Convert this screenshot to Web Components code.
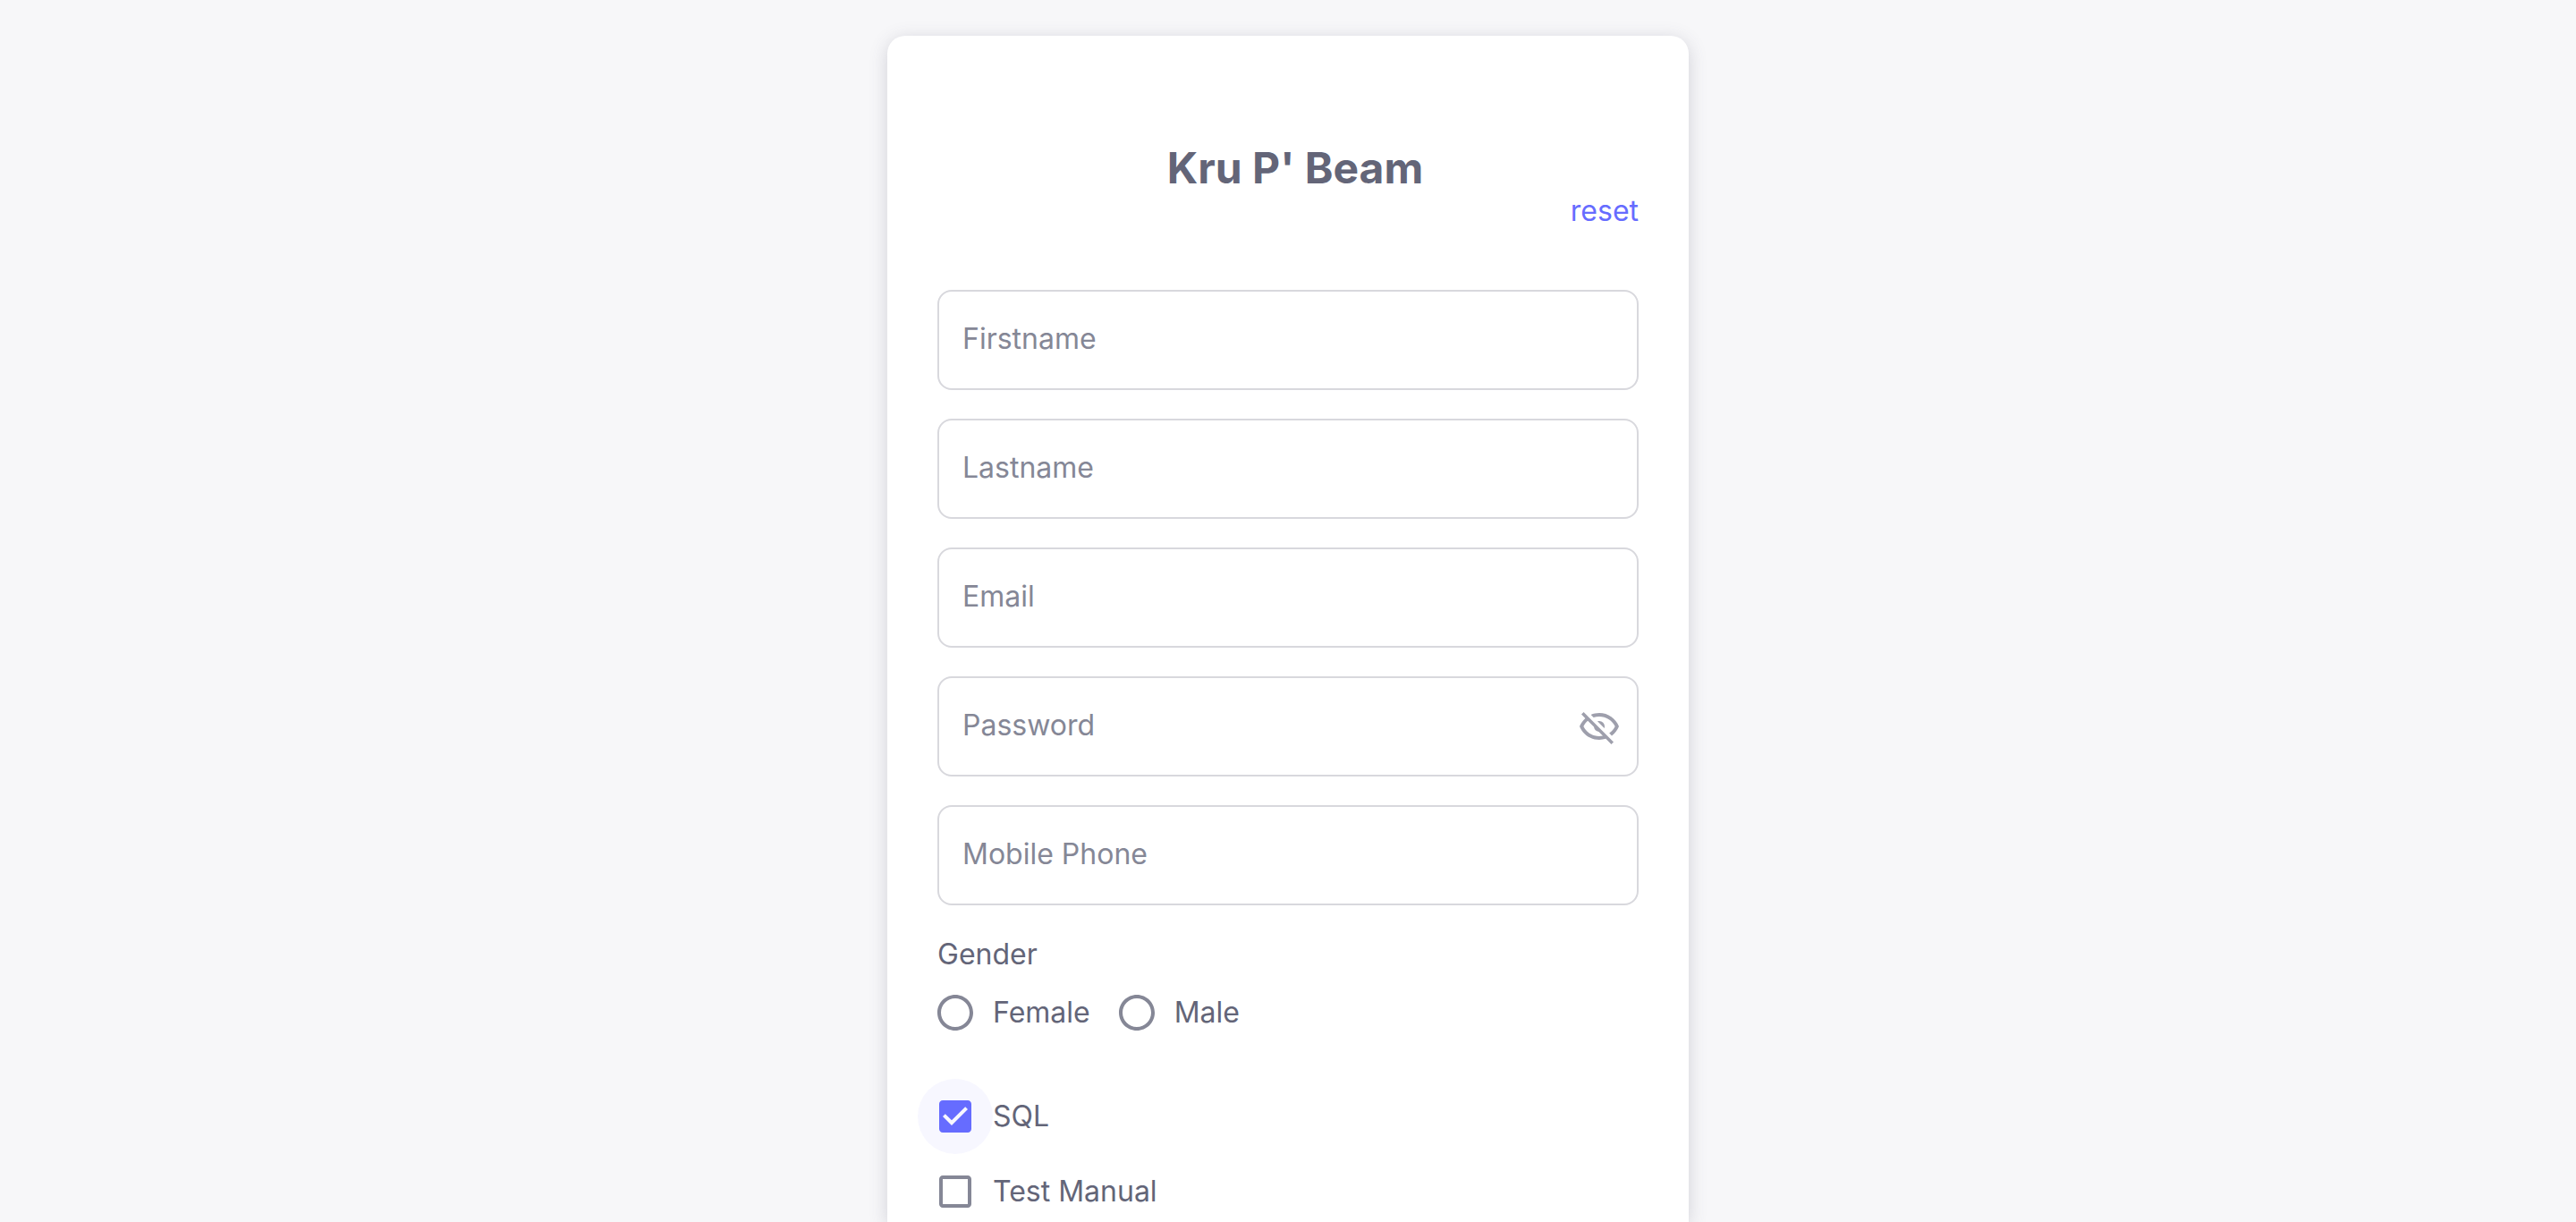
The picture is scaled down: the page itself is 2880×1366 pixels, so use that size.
<!DOCTYPE html>
<html lang="en">
<head>
<meta charset="utf-8">
<title>Kru P' Beam</title>
<style>
  html, body { height: 100%; margin: 0; }
  body {
    --text: #636578;
    --muted: #858796;
    --line: #d8d8dd;
    --icon: #9e9fac;
    --primary: #666cff;
    background: #f7f7f9;
    color: var(--text);
    font: 400 32px/46px Inter, "Liberation Sans", sans-serif;
    overflow: hidden;
  }
</style>
</head>
<body>
<register-page></register-page>

<template id="tpl-page">
  <style>
    :host { display: flex; justify-content: center; height: 100%; box-sizing: border-box; padding: 40px 40px 0; }
    form-card { flex: 0 1 896px; }
    .fields { display: flex; flex-direction: column; gap: 32px; margin-bottom: 32px; }
    fieldset { border: 0; margin: 0 0 32px; padding: 0; min-width: 0; }
    legend { padding: 0; }
    .radios { display: flex; gap: 32px; }
    .checks { display: flex; flex-direction: column; align-items: flex-start; }
  </style>
  <form-card heading="Kru P' Beam">
    <a slot="action" href="#reset">reset</a>
    <div class="fields">
      <text-field label="Firstname"></text-field>
      <text-field label="Lastname"></text-field>
      <text-field label="Email" type="email"></text-field>
      <text-field label="Password" type="password"></text-field>
      <text-field label="Mobile Phone" type="tel"></text-field>
    </div>
    <fieldset>
      <legend>Gender</legend>
      <div class="radios">
        <choice-control type="radio" name="gender">Female</choice-control>
        <choice-control type="radio" name="gender">Male</choice-control>
      </div>
    </fieldset>
    <div class="checks">
      <choice-control type="checkbox" name="sql" checked active>SQL</choice-control>
      <choice-control type="checkbox" name="manual">Test Manual</choice-control>
    </div>
  </form-card>
</template>

<template id="tpl-card">
  <style>
    :host { display: block; box-sizing: border-box; min-width: 0; padding: 112px 56px 0; background: #fff; border-radius: 20px 20px 0 0; box-shadow: 0 4px 20px rgba(76, 78, 100, .22); }
    header { display: flex; flex-direction: column; margin-bottom: 76px; }
    h1 { margin: 0 0 0 16px; text-align: center; font-size: 48px; line-height: 72px; font-weight: 700; }
    .action { display: flex; justify-content: flex-end; line-height: 24px; }
    ::slotted(a) { color: var(--primary); text-decoration: none; }
  </style>
  <header>
    <h1></h1>
    <div class="action"><slot name="action"></slot></div>
  </header>
  <slot></slot>
</template>

<template id="tpl-field">
  <style>
    :host { display: grid; grid-template-columns: minmax(0, 1fr) auto; height: 112px; box-sizing: border-box; border: 2px solid var(--line); border-radius: 16px; }
    label { grid-area: 1 / 1; align-self: center; padding: 0 26px 2px; color: var(--muted); pointer-events: none; }
    input { grid-area: 1 / 1; width: 100%; box-sizing: border-box; padding: 0 26px; border: 0; outline: 0; background: none; color: var(--text); font: inherit; }
    input:not(:placeholder-shown) + label { visibility: hidden; }
    button { grid-area: 1 / 2; align-self: center; margin-right: 18px; padding: 0; border: 0; background: none; color: var(--icon); cursor: pointer; }
    svg { display: block; width: 48px; height: 48px; fill: currentColor; }
  </style>
  <input id="control" placeholder=" ">
  <label for="control"></label>
</template>

<template id="tpl-eye">
  <button type="button" aria-label="toggle password visibility">
    <svg viewBox="0 0 24 24"><path d="M2,5.27L3.28,4L20,20.72L18.73,22L15.65,18.92C14.5,19.3 13.28,19.5 12,19.5C7,19.5 2.73,16.39 1,12C1.69,10.24 2.79,8.69 4.19,7.46L2,5.27M12,9A3,3 0 0,1 15,12C15,12.35 14.94,12.69 14.83,13L11,9.17C11.31,9.06 11.65,9 12,9M12,4.5C17,4.5 21.27,7.61 23,12C22.18,14.08 20.79,15.88 19,17.19L17.58,15.76C18.94,14.82 20.06,13.54 20.82,12C19.17,8.64 15.76,6.5 12,6.5C10.91,6.5 9.84,6.68 8.84,7L7.3,5.47C8.74,4.85 10.33,4.5 12,4.5M3.18,12C4.83,15.36 8.24,17.5 12,17.5C12.69,17.5 13.37,17.43 14,17.29L11.72,15C10.29,14.85 9.15,13.71 9,12.28L5.6,8.87C4.61,9.72 3.78,10.78 3.18,12Z"/></svg>
  </button>
</template>

<template id="tpl-choice">
  <style>
    :host { display: block; }
    label { display: flex; align-items: center; margin-left: -22px; cursor: pointer; }
    .mark { position: relative; padding: 18px; border-radius: 50%; color: var(--muted); }
    :host([active]) .mark { background: #f7f7ff; }
    input { position: absolute; inset: 0; width: 100%; height: 100%; margin: 0; opacity: 0; cursor: inherit; }
    svg { display: block; width: 48px; height: 48px; fill: currentColor; }
    .on { display: none; color: var(--primary); }
    input:checked ~ .on { display: block; }
    input:checked ~ .off { display: none; }
  </style>
  <label><span class="mark"><input></span><span><slot></slot></span></label>
</template>

<template id="tpl-radio-icons">
  <svg class="off" viewBox="0 0 24 24"><path d="M12 2C6.48 2 2 6.48 2 12s4.48 10 10 10 10-4.48 10-10S17.52 2 12 2zm0 18c-4.42 0-8-3.58-8-8s3.58-8 8-8 8 3.58 8 8-3.58 8-8 8z"/></svg>
  <svg class="on" viewBox="0 0 24 24"><path d="M12 2C6.48 2 2 6.48 2 12s4.48 10 10 10 10-4.48 10-10S17.52 2 12 2zm0 18c-4.42 0-8-3.58-8-8s3.58-8 8-8 8 3.58 8 8-3.58 8-8 8z"/><circle cx="12" cy="12" r="5"/></svg>
</template>

<template id="tpl-checkbox-icons">
  <svg class="off" viewBox="0 0 24 24"><path d="M19 5v14H5V5h14m0-2H5c-1.1 0-2 .9-2 2v14c0 1.1.9 2 2 2h14c1.1 0 2-.9 2-2V5c0-1.1-.9-2-2-2z"/></svg>
  <svg class="on" viewBox="0 0 24 24"><path d="M19 3H5c-1.11 0-2 .9-2 2v14c0 1.1.89 2 2 2h14c1.11 0 2-.9 2-2V5c0-1.1-.89-2-2-2zm-9 14l-5-5 1.41-1.41L10 14.17l7.59-7.59L19 8l-9 9z"/></svg>
</template>

<script>
  const clone = id => document.getElementById(id).content.cloneNode(true);

  class FormCard extends HTMLElement {
    connectedCallback() {
      if (this.shadowRoot) return;
      const root = this.attachShadow({ mode: 'open' });
      root.append(clone('tpl-card'));
      root.querySelector('h1').textContent = this.getAttribute('heading');
    }
  }

  class TextField extends HTMLElement {
    connectedCallback() {
      if (this.shadowRoot) return;
      const root = this.attachShadow({ mode: 'open' });
      root.append(clone('tpl-field'));
      const input = root.querySelector('input');
      input.type = this.getAttribute('type') || 'text';
      root.querySelector('label').textContent = this.getAttribute('label');
      if (input.type === 'password') {
        root.append(clone('tpl-eye'));
        root.querySelector('button').addEventListener('click', () => {
          input.type = input.type === 'password' ? 'text' : 'password';
        });
      }
    }
  }

  class ChoiceControl extends HTMLElement {
    connectedCallback() {
      if (this.shadowRoot) return;
      const root = this.attachShadow({ mode: 'open' });
      root.append(clone('tpl-choice'));
      const input = root.querySelector('input');
      input.type = this.getAttribute('type');
      input.name = this.getAttribute('name');
      input.checked = this.hasAttribute('checked');
      root.querySelector('.mark').append(clone(`tpl-${input.type}-icons`));
      // Radios in separate shadow roots do not share a native group.
      input.addEventListener('change', () => {
        if (input.type !== 'radio') return;
        for (const other of this.parentElement.querySelectorAll('choice-control[type="radio"]')) {
          if (other !== this) other.shadowRoot.querySelector('input').checked = false;
        }
      });
    }
  }

  class RegisterPage extends HTMLElement {
    connectedCallback() {
      if (this.shadowRoot) return;
      this.attachShadow({ mode: 'open' }).append(clone('tpl-page'));
    }
  }

  customElements.define('form-card', FormCard);
  customElements.define('text-field', TextField);
  customElements.define('choice-control', ChoiceControl);
  customElements.define('register-page', RegisterPage);
</script>
</body>
</html>
